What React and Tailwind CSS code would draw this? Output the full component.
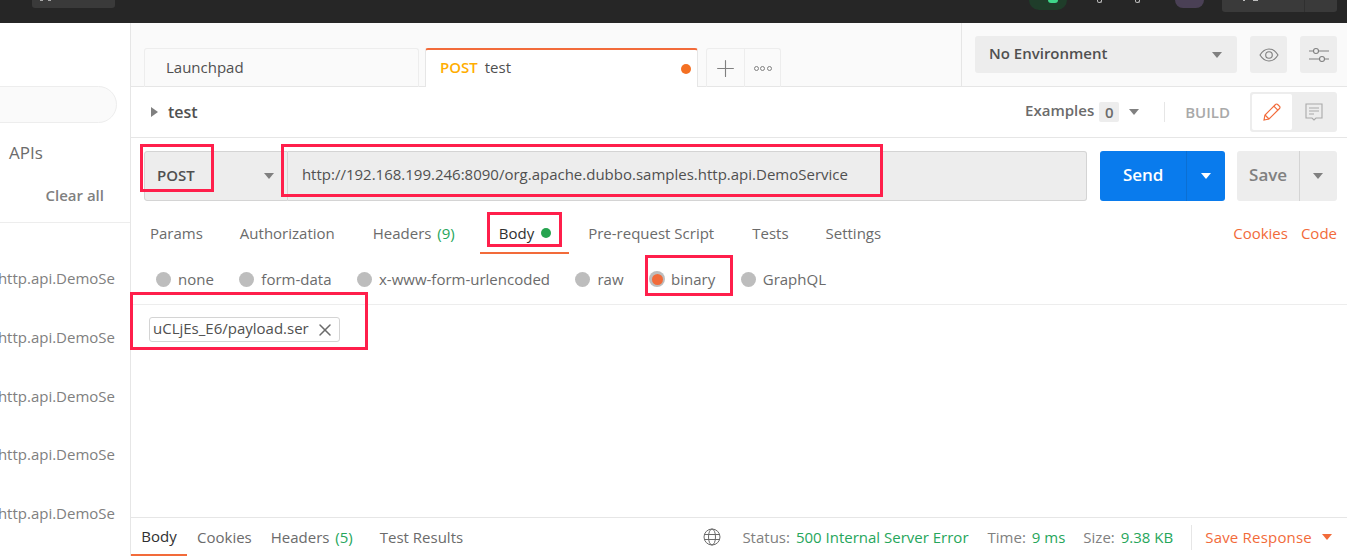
import React from 'react';
import { Plus, X } from 'lucide-react';

function Caret({ className = '' }) {
	return (
		<svg width="10" height="6" viewBox="0 0 10 6" className={className}>
			<path d="M0 0h10L5 6z" fill="currentColor" />
		</svg>
	);
}

function Radio({ label, active }) {
	return (
		<div className="flex items-center gap-[7px]">
			{active ? (
				<span className="mr-[-1px] flex h-[16px] w-[16px] items-center justify-center rounded-full bg-[#bdbdbd]">
					<span className="h-[11px] w-[11px] rounded-full bg-[#f26b3a]"></span>
				</span>
			) : (
				<span className="h-[15px] w-[15px] rounded-full bg-[#bdbdbd]"></span>
			)}
			<span>{label}</span>
		</div>
	);
}

function Annotation({ className }) {
	return <div className={`pointer-events-none absolute border-[3px] border-[#ff1f4b] ${className}`}></div>;
}

const historyRows = [1, 2, 3, 4, 5];

function App() {
	return (
		<div className="relative flex h-[556px] w-[1347px] flex-col overflow-hidden bg-white font-['Open_Sans',sans-serif] text-[15px] text-[#505050]">
			{/* top bar */}
			<header className="relative h-[23px] shrink-0 bg-[#262626]">
				<div className="absolute left-[32px] top-0 h-[8px] w-[83px] rounded-b-[3px] bg-[#3a3a3a]">
					<span className="absolute left-[8px] top-0 h-[1px] w-[3px] bg-[#a9a9a9]"></span>
					<span className="absolute left-[16px] top-0 h-[1px] w-[3px] bg-[#a9a9a9]"></span>
				</div>
				<div className="absolute left-[1029px] top-0 h-[10px] w-[38px] rounded-b-[12px] bg-[#1f3d2a]">
					<span className="absolute left-[19px] top-0 h-[3px] w-[10px] rounded-b-full bg-[#3fd68a]"></span>
				</div>
				<span className="absolute left-[1097px] top-0 h-[3px] w-[5px] rounded-b-full border border-t-0 border-[#bdbdbd]"></span>
				<span className="absolute left-[1135px] top-0 h-[3px] w-[5px] rounded-b-full border border-t-0 border-[#bdbdbd]"></span>
				<div className="absolute left-[1175px] top-0 h-[8px] w-[29px] rounded-b-full bg-[#4a4055]"></div>
				<div className="absolute left-[1222px] top-0 h-[12px] w-[115px] rounded-b-[3px] bg-[#3a3a3a]">
					<span className="absolute left-[21px] top-0 h-[1px] w-[2px] bg-[#bdbdbd]"></span>
					<span className="absolute left-[31px] top-0 h-[1px] w-[5px] bg-[#bdbdbd]"></span>
					<span className="absolute left-[82px] top-0 h-full w-px bg-[#303030]"></span>
				</div>
			</header>

			<div className="flex min-h-0 flex-1">
				{/* sidebar */}
				<aside className="flex w-[131px] shrink-0 flex-col overflow-hidden border-r border-[#e6e6e6] bg-white pt-[63px]">
					<div className="ml-[-20px] h-[37px] w-[137px] shrink-0 rounded-full border border-[#ededed] bg-[#fafafa]"></div>
					<span className="ml-[9px] mt-[17px] text-[17px] text-[#6b6b6b]">APIs</span>
					<span className="mr-[26px] mt-[18px] self-end font-semibold text-[#808080]">Clear all</span>
					<div className="mt-[16px] h-px w-full shrink-0 bg-[#ededed]"></div>
					<div className="pt-[26px]">
						{historyRows.map(row => (
							<div key={row} className="flex h-[58.75px] items-center justify-end whitespace-nowrap pr-[15px] text-[#808080]">
								http.api.DemoSe
							</div>
						))}
					</div>
				</aside>

				{/* main */}
				<main className="flex min-w-0 flex-1 flex-col">
					{/* tabs row */}
					<div className="flex h-[64px] shrink-0 border-b border-[#e6e6e6] bg-[#fafafa]">
						<div className="flex w-[830px] items-end pl-[13px]">
							<div className="mb-[-1px] flex h-[39px] w-[275px] items-center rounded-t-[3px] border border-b-0 border-[#ededed] pb-[2px] pl-[21px]">
								Launchpad
							</div>
							<div className="mb-[-1px] ml-[6px] flex h-[39px] w-[273px] items-center rounded-t-[3px] border-x border-[#e6e6e6] border-t-2 border-t-[#f26b3a] bg-white pl-[14px] pr-[6px]">
								<span className="mb-[2px] font-semibold text-[#ffad00]">POST</span>
								<span className="mb-[2px] ml-[7px]">test</span>
								<span className="ml-auto h-[10px] w-[10px] rounded-full bg-[#f47023]"></span>
							</div>
							<div className="mb-[-1px] ml-[8px] flex h-[39px] rounded-t-[3px] border border-b-0 border-[#ededed]">
								<div className="flex w-[38px] items-center justify-center border-r border-[#ededed] text-[#808080]">
									<Plus size={27} strokeWidth={1} />
								</div>
								<div className="flex w-[35px] items-center justify-center gap-[1.5px]">
									<span className="h-[5px] w-[5px] rounded-full border border-[#808080]"></span>
									<span className="h-[5px] w-[5px] rounded-full border border-[#808080]"></span>
									<span className="h-[5px] w-[5px] rounded-full border border-[#808080]"></span>
								</div>
							</div>
						</div>
						<div className="flex flex-1 items-start gap-[13px] border-l border-[#e6e6e6] pl-[13px] pt-[13px]">
							<div className="flex h-[37px] w-[262px] items-center justify-between rounded-[3px] bg-[#ededed] pl-[14px] pr-[15px] font-semibold text-[#505050]">
								<span className="mb-[3px]">No Environment</span>
								<Caret className="text-[#808080]" />
							</div>
							<div className="flex h-[37px] w-[37px] items-center justify-center rounded-[3px] bg-[#ededed] text-[#808080]">
								<svg width="20" height="14" viewBox="0 0 20 14" fill="none" stroke="currentColor" strokeWidth="1.1">
									<path d="M1 7c2.500-4 5.500-6 9-6s6.500 2 9 6c-2.500 4-5.500 6-9 6s-6.500-2-9-6z" />
									<circle cx="10" cy="7" r="3.300" />
								</svg>
							</div>
							<div className="flex h-[37px] w-[37px] items-center justify-center rounded-[3px] bg-[#ededed] text-[#808080]">
								<svg width="20" height="16" viewBox="0 0 20 16" fill="none" stroke="currentColor" strokeWidth="1.1">
									<path d="M0 4h4.500M9.500 4H20M0 12h10.500M15.500 12H20" />
									<circle cx="7" cy="4" r="2.500" />
									<circle cx="13" cy="12" r="2.500" />
								</svg>
							</div>
						</div>
					</div>

					{/* request name row */}
					<div className="flex h-[51px] shrink-0 items-center border-b border-[#e6e6e6] pl-[20px] pr-[10px]">
						<svg width="7" height="10" viewBox="0 0 7 10" className="text-[#808080]">
							<path d="M0 0l7 5-7 5z" fill="currentColor" />
						</svg>
						<span className="ml-[10px] text-[16px] font-semibold">test</span>
						<div className="ml-auto flex items-center">
							<span className="mb-[3px] font-semibold text-[#6b6b6b]">Examples</span>
							<span className="ml-[5px] flex h-[20px] w-[20px] items-center justify-center rounded-[2px] bg-[#ededed] font-semibold text-[#6b6b6b]">
								0
							</span>
							<Caret className="ml-[10px] text-[#808080]" />
							<span className="ml-[25px] h-[20px] w-px bg-[#e6e6e6]"></span>
							<span className="ml-[20px] font-semibold text-[#a9a9a9]">BUILD</span>
							<div className="ml-[20px] flex h-[40px] w-[87px] rounded-[3px] bg-[#ededed] p-[2px]">
								<div className="flex w-[40px] items-center justify-center rounded-[2px] bg-white text-[#f26b3a]">
									<svg width="20" height="20" viewBox="0 0 20 20" fill="none" stroke="currentColor" strokeWidth="1.2">
										<path d="M2 18l1-5L13.500 2.500a1.500 1.500 0 0 1 2.200 0l1.800 1.800a1.500 1.500 0 0 1 0 2.200L7 17z" />
										<path d="M11.800 4.200l4 4M3 13l4 4" />
									</svg>
								</div>
								<div className="flex flex-1 items-center justify-center text-[#a9a9a9]">
									<svg width="18" height="18" viewBox="0 0 18 18" fill="none" stroke="currentColor" strokeWidth="1.1">
										<path d="M1 1h16v14h-6l-2 2-2-2H1z" />
										<path d="M4 5h10M4 8h10M4 11h5" />
									</svg>
								</div>
							</div>
						</div>
					</div>

					{/* url row */}
					<div className="flex shrink-0 pl-[13px] pr-[10px] pt-[13px]">
						<div className="flex h-[50px] w-[144px] items-center justify-between rounded-l-[3px] border border-[#d4d4d4] bg-[#ededed] pl-[12px] pr-[13px] font-semibold">
							<span className="mb-[2px]">POST</span>
							<Caret className="text-[#808080]" />
						</div>
						<div className="flex h-[50px] w-[800px] items-center rounded-r-[3px] border border-l-0 border-[#d4d4d4] bg-[#ededed] pl-[14px]">
							<span className="mb-[4px]">http://192.168.199.246:8090/org.apache.dubbo.samples.http.api.DemoService</span>
						</div>
						<div className="ml-[13px] flex h-[50px] w-[125px] rounded-[3px] bg-[#097bed] text-white">
							<div className="flex w-[86px] items-center justify-center pb-[2px] text-[17px] font-semibold">Send</div>
							<div className="flex flex-1 items-center justify-center border-l border-[#0b6fd3]">
								<Caret />
							</div>
						</div>
						<div className="ml-[12px] flex h-[50px] w-[100px] rounded-[3px] bg-[#ededed] text-[#808080]">
							<div className="flex w-[62px] items-center justify-center pb-[2px] text-[17px] font-semibold">Save</div>
							<div className="flex flex-1 items-center justify-center border-l border-[#d4d4d4] pr-[2px]">
								<Caret />
							</div>
						</div>
					</div>

					{/* request tabs */}
					<div className="flex h-[46px] shrink-0 items-center pl-[19px] pr-[10px] pt-[18px] text-[#6b6b6b]">
						<span>Params</span>
						<span className="ml-[37px]">Authorization</span>
						<span className="ml-[38px]">
							Headers <span className="ml-[2px] text-[#26a65b]">(9)</span>
						</span>
						<span className="ml-[44px] flex items-center text-[#303030]">
							Body
							<span className="ml-[7px] h-[10px] w-[10px] rounded-full bg-[#26a44f]"></span>
						</span>
						<span className="ml-[37px]">Pre-request Script</span>
						<span className="ml-[38px]">Tests</span>
						<span className="ml-[37px]">Settings</span>
						<span className="ml-auto text-[#f26b3a]">Cookies</span>
						<span className="ml-[13px] text-[#f26b3a]">Code</span>
					</div>
					<div className="relative h-0 shrink-0">
						<div className="absolute left-[349px] top-[5px] h-[2px] w-[89px] bg-[#f26b3a]"></div>
					</div>

					{/* body types */}
					<div className="mt-[14px] flex h-[44px] shrink-0 items-start gap-[25.5px] border-b border-[#ededed] pl-[25px] pt-[7px] text-[#6b6b6b]">
						<Radio label="none" />
						<Radio label="form-data" />
						<Radio label="x-www-form-urlencoded" />
						<Radio label="raw" />
						<Radio label="binary" active />
						<Radio label="GraphQL" />
					</div>

					{/* selected file */}
					<div className="flex-1 pl-[18px] pt-[12px]">
						<div className="flex h-[25px] w-[191px] items-center justify-between rounded-[3px] border border-[#d4d4d4] pl-[3px] pr-[4px]">
							<span className="mb-[2px]">uCLjEs_E6/payload.ser</span>
							<X size={20} strokeWidth={1.8} className="text-[#6b6b6b]" />
						</div>
					</div>

					{/* response bar */}
					<div className="flex h-[39px] shrink-0 items-center border-t border-[#e6e6e6] pr-[15px] text-[#6b6b6b]">
						<div className="flex h-full w-[56px] items-center justify-center border-b-2 border-[#f26b3a] text-[#303030]">Body</div>
						<span className="ml-[10px]">Cookies</span>
						<span className="ml-[19px]">
							Headers <span className="ml-[2px] text-[#26a65b]">(5)</span>
						</span>
						<span className="ml-[27px]">Test Results</span>
						<svg width="18" height="18" viewBox="0 0 18 18" fill="none" stroke="currentColor" strokeWidth="1" className="ml-auto">
							<circle cx="9" cy="9" r="8" />
							<ellipse cx="9" cy="9" rx="3.500" ry="8" />
							<path d="M1.500 6.500h15M1.500 11.500h15" />
						</svg>
						<span className="ml-[21px] text-[#808080]">Status:</span>
						<span className="ml-[6px] text-[#26a65b]">500 Internal Server Error</span>
						<span className="ml-[19px] text-[#808080]">Time:</span>
						<span className="ml-[6px] text-[#26a65b]">9 ms</span>
						<span className="ml-[18px] text-[#808080]">Size:</span>
						<span className="ml-[6px] text-[#26a65b]">9.38 KB</span>
						<span className="ml-[18px] h-[25px] w-px bg-[#e6e6e6]"></span>
						<span className="ml-[13px] tracking-[0.2px] text-[#f26b3a]">Save Response</span>
						<Caret className="ml-[10px] text-[#f26b3a]" />
					</div>
				</main>
			</div>

			{/* red annotation boxes */}
			<Annotation className="left-[140px] top-[144px] h-[48px] w-[74px]" />
			<Annotation className="left-[281px] top-[144px] h-[53px] w-[602px]" />
			<Annotation className="left-[487px] top-[212px] h-[35px] w-[75px]" />
			<Annotation className="left-[645px] top-[255px] h-[41px] w-[88px]" />
			<Annotation className="left-[130px] top-[292px] h-[58px] w-[238px]" />
		</div>
	);
}

export default App;
